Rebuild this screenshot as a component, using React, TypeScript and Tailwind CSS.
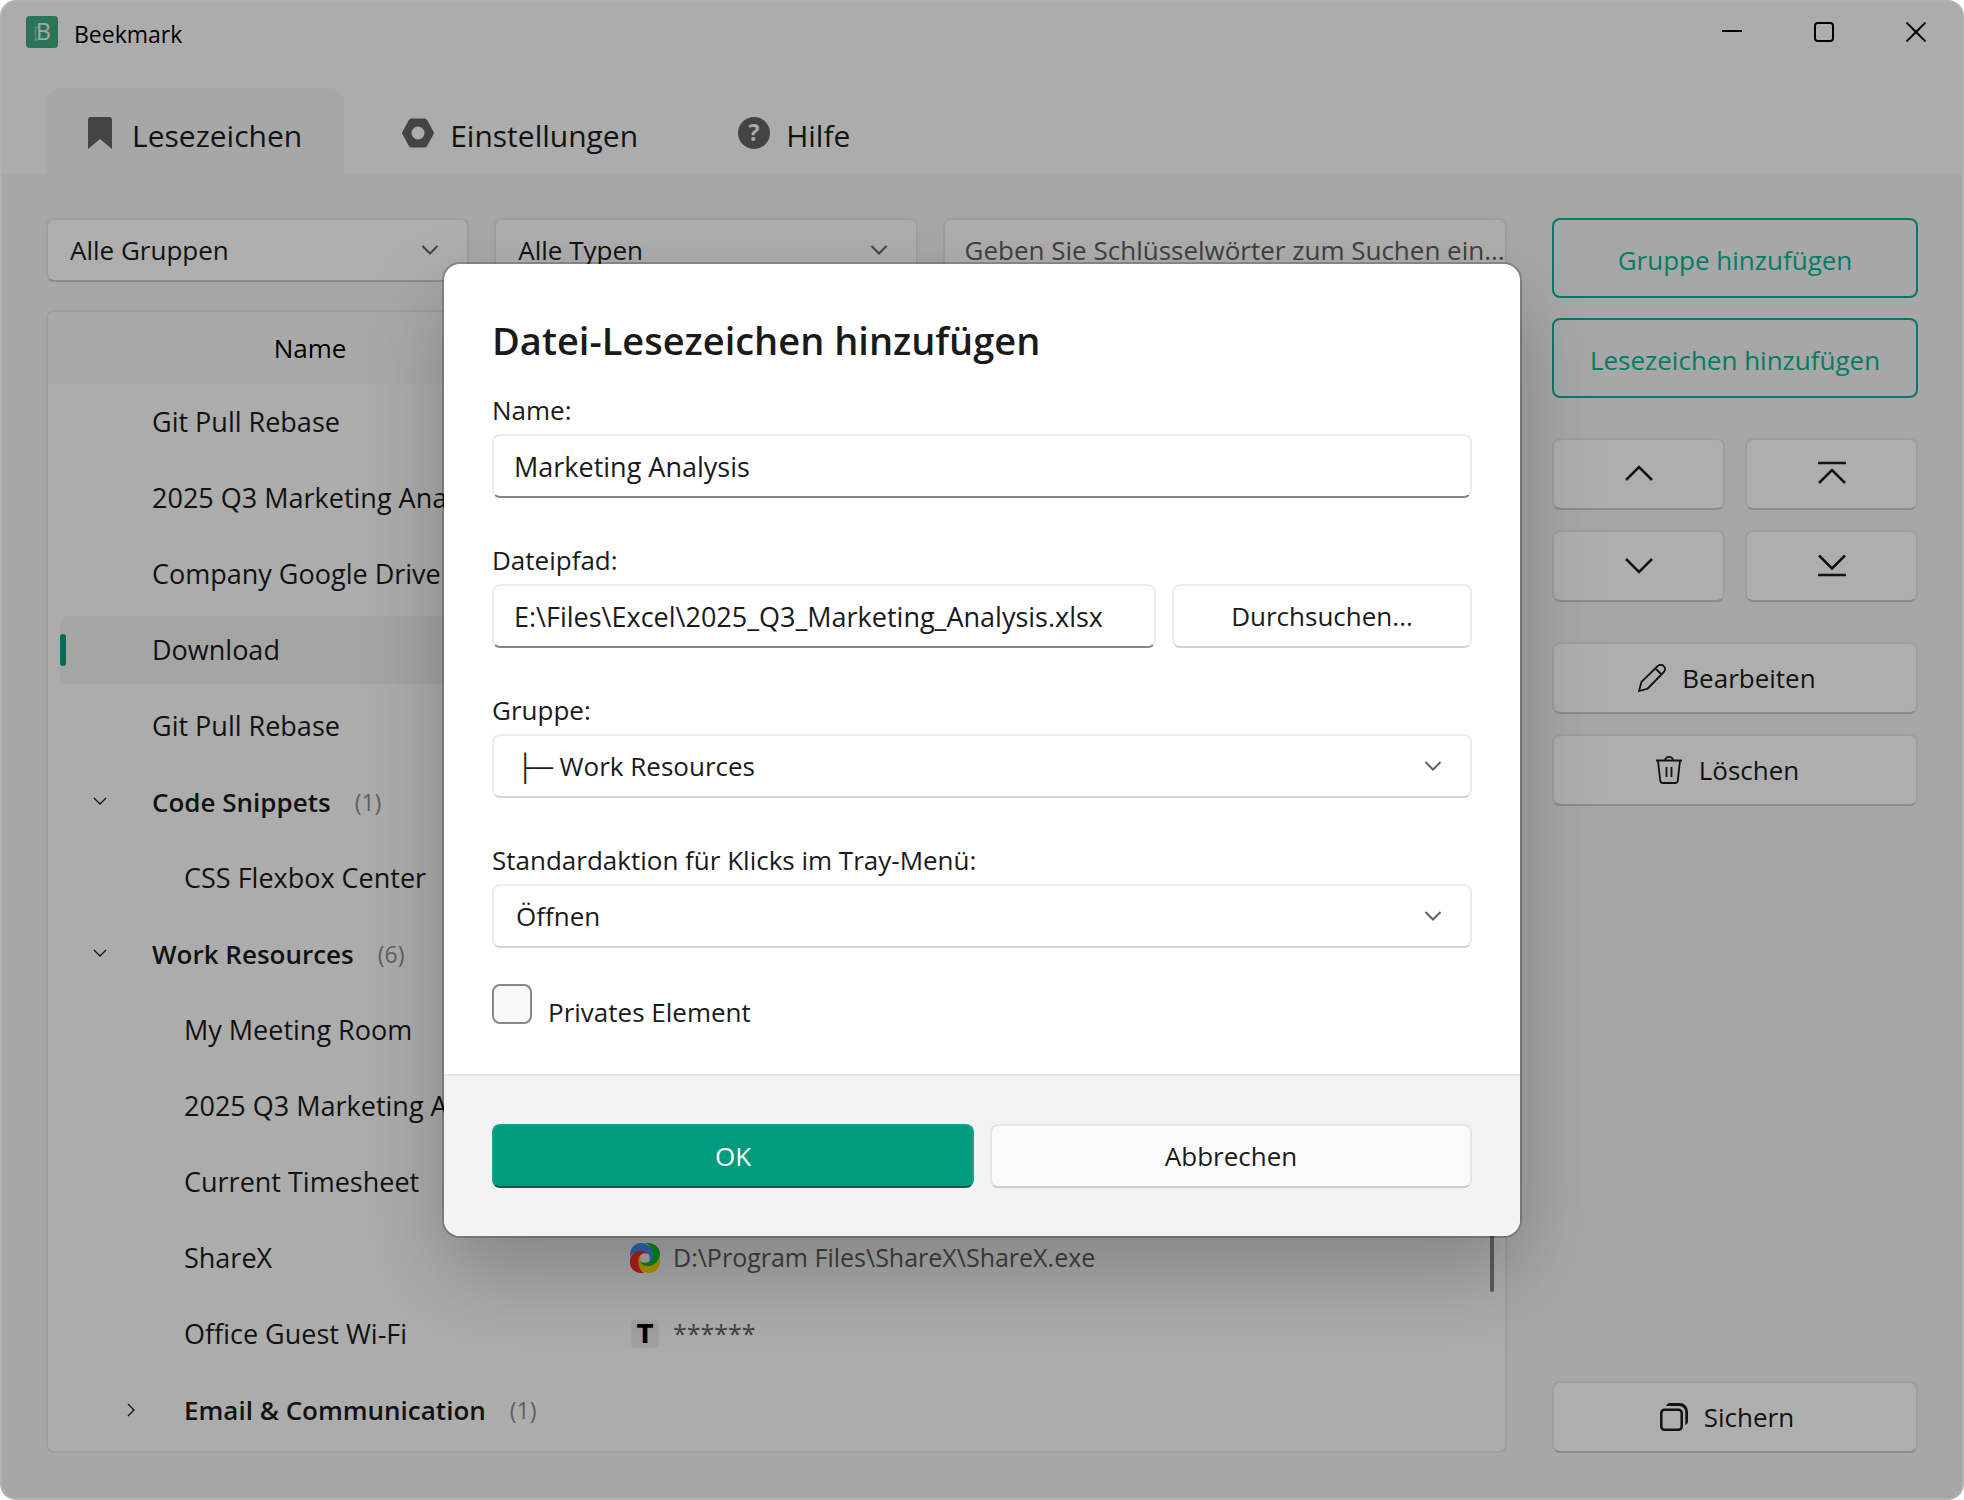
import type { ReactNode } from "react";
import clsx from "clsx";

type Row = {
  name: string;
  level: 0 | 1;
  count?: number;
  open?: boolean;
  selected?: boolean;
  icon?: ReactNode;
  target?: string;
};

function AppLogo() {
  return (
    <svg viewBox="0 0 32 32" className="size-8" aria-hidden="true">
      <rect width="32" height="32" rx="4" fill="#3da782" />
      <path d="M12 11.500H9.500v12.500H12" fill="none" stroke="#8fcab4" strokeWidth="1.500" />
      <text x="10" y="24" fontFamily="Open Sans, sans-serif" fontSize="23" fontWeight="500" fill="#f0f0f0">B</text>
    </svg>
  );
}

function ShareXIcon() {
  const crescent =
    "M0 15C-1 6 4 0 11 0C18 0 23 6 23 12C23 15 22 18 19 20C21 14 19 9 14 8.500C8 8 2 9 0 15Z";
  return (
    <svg viewBox="0 0 30 30" className="size-[30px] shrink-0" aria-hidden="true">
      <clipPath id="red-over-blue">
        <rect x="0" y="8" width="12" height="22" />
      </clipPath>
      <path d={crescent} fill="#ff2d2d" transform="rotate(270 15 15)" />
      <path d={crescent} fill="#ffd200" transform="rotate(180 15 15)" />
      <path d={crescent} fill="#00c42c" transform="rotate(90 15 15)" />
      <path d={crescent} fill="#4094ff" />
      <g clipPath="url(#red-over-blue)">
        <path d={crescent} fill="#ff2d2d" transform="rotate(270 15 15)" />
      </g>
    </svg>
  );
}

function TextIcon() {
  return (
    <svg viewBox="0 0 30 30" className="size-[30px] shrink-0" aria-hidden="true">
      <rect x="1" y="1" width="28" height="28" rx="4" fill="#e6e6e6" stroke="#eeeeee" />
      <text x="15" y="24" textAnchor="middle" fontFamily="Inter, sans-serif" fontSize="26" fontWeight="800" fill="#000">
        T
      </text>
    </svg>
  );
}

function BookmarkIcon() {
  return (
    <svg viewBox="0 0 24 32" className="mr-1 h-8 w-6" fill="#626262" aria-hidden="true">
      <path d="M0 3a3 3 0 0 1 3-3h18a3 3 0 0 1 3 3v29L12 22 0 32Z" />
    </svg>
  );
}

function NutIcon() {
  return (
    <svg viewBox="0 0 32 32" className="size-8" fill="#626262" aria-hidden="true">
      <path
        fillRule="evenodd"
        d="M9.500 1.500h13a3 3 0 0 1 2.600 1.500l6.300 11.500a3 3 0 0 1 0 3L25.100 29a3 3 0 0 1-2.600 1.500h-13A3 3 0 0 1 6.900 29L.600 17.500a3 3 0 0 1 0-3L6.900 3a3 3 0 0 1 2.600-1.500ZM16 9.500a6.500 6.500 0 1 0 0 13 6.500 6.500 0 0 0 0-13Z"
      />
    </svg>
  );
}

function HelpIcon() {
  return (
    <svg viewBox="0 0 32 32" className="size-8" aria-hidden="true">
      <circle cx="16" cy="16" r="16" fill="#626262" />
      <text x="16" y="24" textAnchor="middle" fontFamily="Open Sans, sans-serif" fontSize="23" fontWeight="700" fill="#f6f6f6">
        ?
      </text>
    </svg>
  );
}

function Stroke({ box, className, width = 2.5, d }: { box: string; className: string; width?: number; d: string }) {
  return (
    <svg viewBox={box} className={className} fill="none" stroke="currentColor" strokeWidth={width} aria-hidden="true">
      <path d={d} />
    </svg>
  );
}

const PencilIcon = () => (
  <Stroke
    box="0 0 28 28"
    className="size-7"
    width={1.8}
    d="M1 27l2.200-8.200c.2-.6.400-1 .8-1.400L19.800 2a4 4 0 0 1 5.900.1 4 4 0 0 1 .1 5.900L10.300 24c-.4.400-.8.600-1.400.8ZM17.500 4.500l6 6"
  />
);

const TrashIcon = () => (
  <Stroke
    box="0 0 28 28"
    className="size-7"
    width={1.8}
    d="M1 4.500h26M10 4.500a4 3.600 0 0 1 8 0M3 4.500l2.200 20.200a2.600 2.600 0 0 0 2.600 2.300h12.400a2.600 2.600 0 0 0 2.600-2.300L25 4.500M11.500 11v10M16.500 11v10"
  />
);

// front sheet plus a back edge that tapers off at both ends
const CopyIcon = () => (
  <svg viewBox="0 0 28 28" className="size-7" aria-hidden="true">
    <path
      d="M4.500 6.800h14a3.200 3.200 0 0 1 3.200 3.200v13.500a3.200 3.200 0 0 1-3.200 3.200h-14a3.200 3.200 0 0 1-3.200-3.200V10a3.200 3.200 0 0 1 3.200-3.200Z"
      fill="none"
      stroke="currentColor"
      strokeWidth="2.500"
    />
    <path d="M6 3C7 1 8 0 10 0h9.500A8.500 8.500 0 0 1 28 8.500V18c0 2-1 3-2.700 4V9A6 6 0 0 0 19.300 3Z" fill="currentColor" />
  </svg>
);

const rows: Row[] = [
  { name: "Git Pull Rebase", level: 0 },
  { name: "2025 Q3 Marketing Analysis", level: 0 },
  { name: "Company Google Drive", level: 0 },
  { name: "Download", level: 0, selected: true },
  { name: "Git Pull Rebase", level: 0 },
  { name: "Code Snippets", level: 0, count: 1, open: true },
  { name: "CSS Flexbox Center", level: 1 },
  { name: "Work Resources", level: 0, count: 6, open: true },
  { name: "My Meeting Room", level: 1 },
  { name: "2025 Q3 Marketing Analysis", level: 1 },
  { name: "Current Timesheet", level: 1 },
  { name: "ShareX", level: 1, icon: <ShareXIcon />, target: "D:\\Program Files\\ShareX\\ShareX.exe" },
  { name: "Office Guest Wi-Fi", level: 1, icon: <TextIcon />, target: "******" },
  { name: "Email & Communication", level: 1, count: 1, open: false },
];

const tabs = [
  { label: "Lesezeichen", icon: <BookmarkIcon />, active: true },
  { label: "Einstellungen", icon: <NutIcon /> },
  { label: "Hilfe", icon: <HelpIcon /> },
];

const fieldBase = "h-16 w-full rounded-lg border-2";

function Select({ id, label, value, muted }: { id: string; label?: string; value: string; muted?: boolean }) {
  return (
    <div className="relative">
      <select
        id={id}
        aria-label={label}
        className={clsx(
          fieldBase,
          "appearance-none pl-[22px] pr-16",
          muted ? "border-[#e3e3e3] border-b-[#c7c7c7] bg-[#f9f9f9]" : "border-[#ececec] border-b-[#d3d3d3] bg-white"
        )}
      >
        <option>{value}</option>
      </select>
      <span className="pointer-events-none absolute right-[30px] top-6 text-[#606060]">
        <Stroke box="0 0 18 16" className="h-4 w-[18px]" width={2} d="M1.500 4L9 11.500 16.500 4" />
      </span>
    </div>
  );
}

function SideButton({ children, icon, label }: { children?: ReactNode; icon: ReactNode; label?: string }) {
  return (
    <button
      type="button"
      aria-label={label}
      className={clsx(
        "flex h-[72px] w-full items-center justify-center gap-4 rounded-lg border-2 border-[#e3e3e3] border-b-[#c7c7c7] bg-[#f9f9f9]",
        children && "pr-4"
      )}
    >
      {icon}
      {children}
    </button>
  );
}

function AccentButton({ children }: { children: ReactNode }) {
  return (
    <button type="button" className="h-20 w-full rounded-lg border-2 border-[#00b494] pt-1 text-[#00b494]">
      {children}
    </button>
  );
}

function TitleBar() {
  return (
    <header className="flex h-[60px] items-center justify-between pl-6 pr-9">
      <div className="flex items-center gap-4">
        <AppLogo />
        <span className="pt-1 text-[23px] text-black">Beekmark</span>
      </div>
      <div className="flex items-center gap-[72px] text-black">
        <button type="button" aria-label="Minimieren">
          <Stroke box="0 0 20 20" className="size-5" width={2} d="M0 9h20" />
        </button>
        <button type="button" aria-label="Maximieren">
          <Stroke
            box="0 0 20 20"
            className="size-5"
            width={2}
            d="M4 1h12a3 3 0 0 1 3 3v12a3 3 0 0 1-3 3H4a3 3 0 0 1-3-3V4a3 3 0 0 1 3-3Z"
          />
        </button>
        <button type="button" aria-label="Schließen">
          <Stroke box="0 0 20 20" className="size-5" width={2} d="M.5.5l19 19M19.500.5l-19 19" />
        </button>
      </div>
    </header>
  );
}

function BookmarkTable() {
  return (
    <div className="relative flex-1 overflow-hidden rounded-lg border-2 border-[#e3e3e3] bg-[#f7f7f7]">
      <table className="w-full table-fixed">
        <colgroup>
          <col className="w-[524px]" />
          <col />
        </colgroup>
        <thead>
          <tr className="h-[72px] bg-[#f2f2f2]">
            <th className="font-normal text-black">Name</th>
            <td />
          </tr>
        </thead>
        <tbody>
          {rows.map((row, i) => (
            <tr key={i} className="h-[76px]">
              <td className="pl-3">
                <div
                  className={clsx(
                    "flex h-[68px] items-center whitespace-nowrap rounded-l-lg",
                    row.selected && "bg-[#ececec]",
                    row.level === 1 && "pl-8"
                  )}
                >
                  <span className="flex w-[92px] items-center">
                    {row.selected && <span className="h-8 w-[6px] rounded-full bg-[#009a7e]" />}
                    {row.count !== undefined && (
                      <button
                        type="button"
                        aria-label={row.open ? "Zuklappen" : "Aufklappen"}
                        className={clsx("ml-8", !row.open && "-rotate-90")}
                      >
                        <Stroke box="0 0 16 16" className="size-4" width={1.3} d="M2 4l6 6 6-6" />
                      </button>
                    )}
                  </span>
                  <span className={row.count !== undefined ? "font-semibold" : "text-[27px]"}>{row.name}</span>
                  {row.count !== undefined && <span className="ml-6 text-[23px] text-[#8a8a8a]">({row.count})</span>}
                </div>
              </td>
              <td className="pl-[58px]">
                {row.target && (
                  <div className="flex items-center gap-[13px] text-[25px] text-[#5c5c5c]">
                    {row.icon}
                    {row.target}
                  </div>
                )}
              </td>
            </tr>
          ))}
        </tbody>
      </table>
      <div className="absolute right-[11px] top-20 h-[900px] w-1 rounded-full bg-[#868686]" />
    </div>
  );
}

function AddFileDialog() {
  return (
    <div className="absolute inset-0 flex items-center justify-center rounded-2xl bg-black/30">
      <form
        role="dialog"
        aria-labelledby="dialog-title"
        className="w-[1076px] overflow-hidden rounded-2xl bg-white shadow-[0_0_0_2px_rgba(0,0,0,0.2),0_36px_84px_rgba(0,0,0,0.24)]"
      >
        <div className="px-12 pb-[42px] pt-12">
          <h1 id="dialog-title" className="text-[38px] font-semibold leading-[56px]">
            Datei-Lesezeichen hinzufügen
          </h1>

          <div className="mt-6 flex flex-col gap-11">
            <div>
              <label htmlFor="name" className="block h-[42px] leading-9">Name:</label>
              <input
                id="name"
                defaultValue="Marketing Analysis"
                className={clsx(fieldBase, "border-[#ececec] border-b-[#868686] px-5 text-[27px]")}
              />
            </div>

            <div>
              <label htmlFor="path" className="block h-[42px] leading-9">Dateipfad:</label>
              <div className="flex gap-4">
                <input
                  id="path"
                  defaultValue="E:\Files\Excel\2025_Q3_Marketing_Analysis.xlsx"
                  className={clsx(fieldBase, "border-[#ececec] border-b-[#868686] px-5 text-[27px]")}
                />
                <button
                  type="button"
                  className="w-[300px] shrink-0 rounded-lg border-2 border-[#ececec] border-b-[#d3d3d3]"
                >
                  Durchsuchen...
                </button>
              </div>
            </div>

            <div>
              <label htmlFor="group" className="block h-[42px] leading-9">Gruppe:</label>
              <Select id="group" value="├─ Work Resources" />
            </div>

            <div>
              <label htmlFor="action" className="block h-[42px] leading-9">Standardaktion für Klicks im Tray-Menü:</label>
              <Select id="action" value="Öffnen" />
            </div>
          </div>

          <div className="mt-9 flex items-start gap-4">
            <input
              id="private"
              type="checkbox"
              className="size-10 appearance-none rounded-lg border-2 border-[#8a8a8a] bg-[#f9f9f9]"
            />
            <label htmlFor="private" className="pt-2 leading-10">Privates Element</label>
          </div>
        </div>

        <footer className="grid grid-cols-2 gap-4 border-t-2 border-[#e5e5e5] bg-[#f3f3f3] p-12">
          <button
            type="submit"
            className="h-16 rounded-lg border-2 border-[#14a288] border-b-[#00614f] bg-[#009a7e] text-white"
          >
            OK
          </button>
          <button type="button" className="h-16 rounded-lg border-2 border-[#e5e5e5] border-b-[#cccccc] bg-[#fbfbfb]">
            Abbrechen
          </button>
        </footer>
      </form>
    </div>
  );
}

export default function App() {
  return (
    <div className="relative flex min-h-screen flex-col overflow-hidden bg-white font-['Open_Sans',sans-serif] text-[26px] text-[#1a1a1a]">
      <div className="flex flex-1 flex-col overflow-hidden rounded-2xl border-2 border-white bg-[#f6f6f6]">
        <TitleBar />

        <nav className="mt-[26px] flex gap-4 px-11">
          {tabs.map((tab) => (
            <button
              key={tab.label}
              type="button"
              className={clsx(
                "flex h-[86px] items-center gap-4 px-[42px] pt-2 text-[30px]",
                tab.active && "rounded-t-2xl bg-[#efefef]"
              )}
            >
              <span className="mb-1">{tab.icon}</span>
              {tab.label}
            </button>
          ))}
        </nav>

        <main className="flex flex-1 gap-[45px] bg-[#efefef] px-11 pb-[45px] pt-11">
          <section className="flex min-w-0 flex-1 flex-col gap-7">
            <div className="grid grid-cols-[3fr_3fr_4fr] gap-[25px]">
              <Select id="groups" label="Gruppen" value="Alle Gruppen" muted />
              <Select id="types" label="Typen" value="Alle Typen" muted />
              <input
                aria-label="Suchen"
                placeholder="Geben Sie Schlüsselwörter zum Suchen ein..."
                className={clsx(fieldBase, "border-[#e3e3e3] border-b-[#9a9a9a] bg-[#f9f9f9] pl-5 placeholder:text-[#5c5c5c]")}
              />
            </div>
            <BookmarkTable />
          </section>

          <aside className="flex w-[366px] flex-col gap-5">
            <AccentButton>Gruppe hinzufügen</AccentButton>
            <AccentButton>Lesezeichen hinzufügen</AccentButton>

            <div className="my-5 grid grid-cols-2 gap-5">
              <SideButton
                label="Nach oben"
                icon={<Stroke box="0 0 28 28" className="size-7" d="M1 20l13-13 13 13" />}
              />
              <SideButton
                label="Ganz nach oben"
                icon={<Stroke box="0 0 28 28" className="size-7" d="M0 3h28M1 23l13-13 13 13" />}
              />
              <SideButton
                label="Nach unten"
                icon={<Stroke box="0 0 28 28" className="size-7" d="M1 7l13 13L27 7" />}
              />
              <SideButton
                label="Ganz nach unten"
                icon={<Stroke box="0 0 28 28" className="size-7" d="M0 23h28M1 3.500l13 13 13-13" />}
              />
            </div>

            <SideButton icon={<PencilIcon />}>Bearbeiten</SideButton>
            <SideButton icon={<TrashIcon />}>Löschen</SideButton>
            <div className="mt-auto">
              <SideButton icon={<CopyIcon />}>Sichern</SideButton>
            </div>
          </aside>
        </main>
      </div>
      <AddFileDialog />
    </div>
  );
}
